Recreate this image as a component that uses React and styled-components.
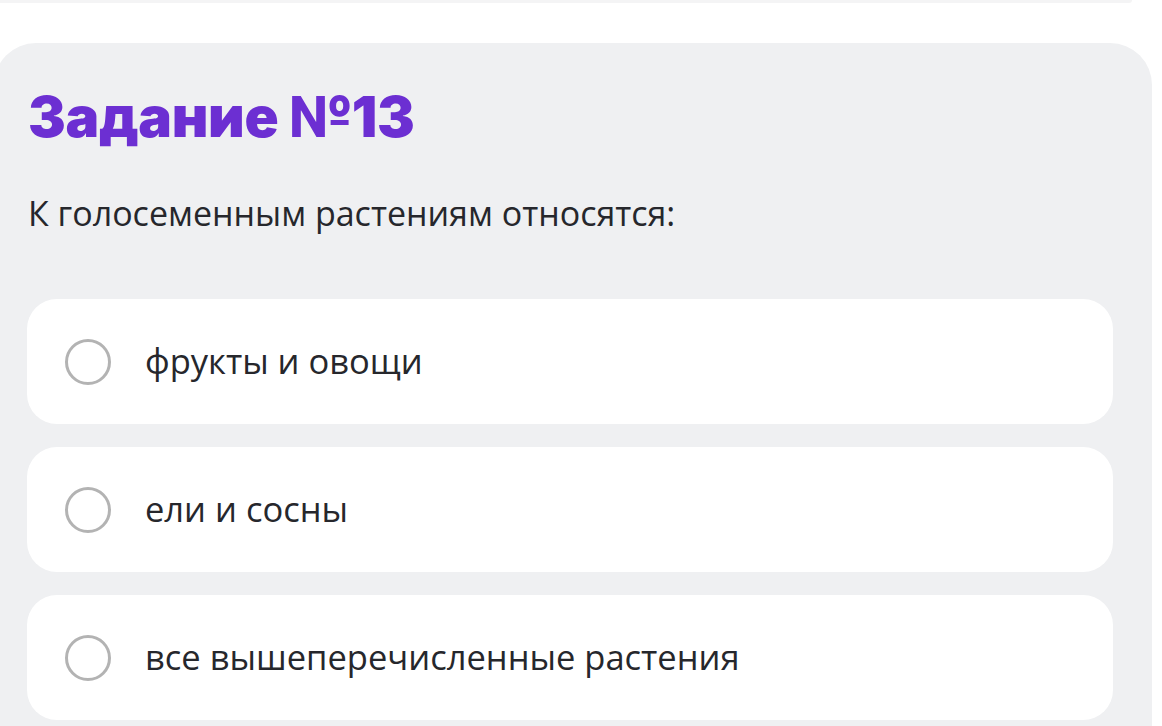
import React from "react";
import styled, { createGlobalStyle } from "styled-components";

const Global = createGlobalStyle`
  html, body { margin: 0; padding: 0; background: #ffffff; }
  body { font-family: "Open Sans", "Noto Sans", sans-serif; overflow: hidden; }
`;

const Page = styled.div`
  width: 1162px;
  height: 726px;
  overflow: hidden;
  display: flex;
  flex-direction: column;
`;

const TopStrip = styled.div`
  height: 3px;
  margin-right: 30px;
  background: #f4f4f5;
  border-radius: 0 0 3px 0;
`;

const Panel = styled.section`
  margin-top: 40px;
  margin-left: -6px;
  width: 1158px;
  flex: 1;
  box-sizing: border-box;
  background: #eff0f2;
  border-radius: 42px 42px 0 0;
  padding: 42px 39px 0 33px;
  display: flex;
  flex-direction: column;
`;

const Title = styled.h1`
  margin: 0;
  font-family: Inter, "Noto Sans", sans-serif;
  font-weight: 900;
  font-size: 56.5px;
  line-height: 64px;
  letter-spacing: -0.3px;
  color: #6c2fd2;
  padding-left: 1px;
`;

const Question = styled.p`
  margin: 42px 0 0 1px;
  font-family: "Open Sans", "Noto Sans", sans-serif;
  font-size: 34px;
  line-height: 44px;
  color: #26272c;
`;

const Options = styled.div`
  margin-top: 64px;
  display: flex;
  flex-direction: column;
  gap: 23px;
`;

const Option = styled.label`
  height: 125px;
  box-sizing: border-box;
  background: #ffffff;
  border-radius: 30px;
  display: flex;
  align-items: center;
  padding-left: 38px;
  gap: 34px;
  cursor: pointer;
`;

const Radio = styled.span`
  width: 46px;
  height: 46px;
  box-sizing: border-box;
  border-radius: 50%;
  border: 3px solid #b3b3b3;
  flex-shrink: 0;
`;

const OptionText = styled.span`
  font-family: "Open Sans", "Noto Sans", sans-serif;
  font-size: 34.5px;
  color: #26272c;
  margin-top: -2px;
`;

const options = ["фрукты и овощи", "ели и сосны", "все вышеперечисленные растения"];

export default function App() {
  return (
    <Page>
      <Global />
      <TopStrip />
      <Panel>
        <Title>Задание №13</Title>
        <Question>К голосеменным растениям относятся:</Question>
        <Options>
          {options.map((o) => (
            <Option key={o}>
              <Radio />
              <OptionText>{o}</OptionText>
            </Option>
          ))}
        </Options>
      </Panel>
    </Page>
  );
}
